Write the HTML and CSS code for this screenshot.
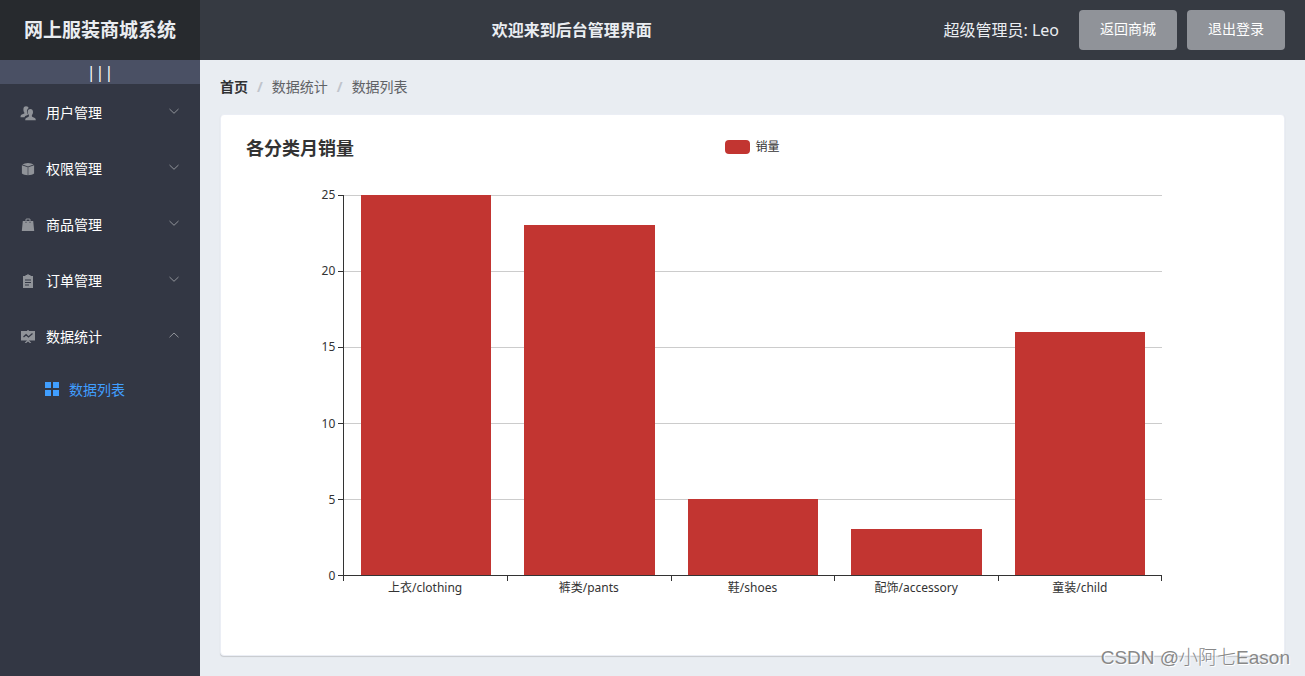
FILE: index.html
```html
<!DOCTYPE html>
<html lang="zh-CN">
<head>
<meta charset="utf-8">
<meta name="viewport" content="width=device-width, initial-scale=1">
<title>网上服装商城系统</title>
<link rel="stylesheet" href="styles.css">
</head>
<body>
<div class="app">
  <header class="header">
    <h1 class="logo">网上服装商城系统</h1>
    <h2 class="welcome">欢迎来到后台管理界面</h2>
    <div class="account">
      <span class="user">超级管理员: Leo</span>
      <div class="actions">
        <button class="btn" type="button">返回商城</button>
        <button class="btn" type="button">退出登录</button>
      </div>
    </div>
  </header>
  <div class="body">
    <aside class="sidebar">
      <button class="toggle" type="button" aria-label="折叠菜单"><span>|</span><span>|</span><span>|</span></button>
      <nav class="menu">
        <button class="menu-item" type="button">
          <svg class="icon" viewBox="0 0 16 16"><path d="M6 1.2c1.700 0 2.400.8 2.700 1.900-1.300.8-2 2.200-1.700 4 .1 1 .5 1.800 1 2.400-.3.6-1.200.900-2.200 1.300-.700.3-1 .7-1.200 1.400H.5c0-2 .6-2.500 2.600-3.200.9-.3 1.400-.6 1.400-1.300C3.700 7 3.400 5.800 3.400 4.200 3.400 2.300 4.300 1.200 6 1.200z"/><path d="M10.300 4c1.700 0 2.700 1.100 2.700 2.900 0 1.400-.4 2.300-1.100 3.100v1c0 .6.5.9 1.300 1.200 1.700.6 2.600 1 2.600 3H5.200c0-2 .7-2.400 2.500-3 .8-.3 1.200-.6 1.200-1.200v-1C8.200 9.300 7.700 8.300 7.700 6.900 7.700 5.100 8.600 4 10.300 4z"/></svg>
          <span class="menu-text">用户管理</span>
          <svg class="arrow" viewBox="0 0 12 12"><path d="M1.500 4 6 8.300 10.500 4"/></svg>
        </button>
        <button class="menu-item" type="button">
          <svg class="icon" viewBox="0 0 16 16"><path d="M8 2c2.200.3 4.200.8 5.600 1.600L8 5.500 2.400 3.600C3.800 2.800 5.800 2.300 8 2z"/><path d="M1.900 4.200 7.700 6.200V14.300C5.300 14 3.300 13.300 1.900 12.400z"/><path d="M14.100 4.200 8.300 6.200V14.300c2.400-.3 4.400-1 5.800-1.900z"/></svg>
          <span class="menu-text">权限管理</span>
          <svg class="arrow" viewBox="0 0 12 12"><path d="M1.500 4 6 8.300 10.500 4"/></svg>
        </button>
        <button class="menu-item" type="button">
          <svg class="icon" viewBox="0 0 16 16"><path fill-rule="evenodd" d="M5.500 4V2.200L6.500 1.500h3l1 .7V4h2.700l1 10H1.800l1-10zM6.500 4h3V2.500h-3zM5.500 4.700v1h1v-1zM9.500 4.700v1h1v-1z"/></svg>
          <span class="menu-text">商品管理</span>
          <svg class="arrow" viewBox="0 0 12 12"><path d="M1.500 4 6 8.300 10.500 4"/></svg>
        </button>
        <button class="menu-item" type="button">
          <svg class="icon" viewBox="0 0 16 16"><path fill-rule="evenodd" d="M3 3h2.500V2h1.300a1.300 1.300 0 0 1 2.400 0h1.300v1H13v12H3zM5 6.500v1h6v-1zM5 9v1h6V9zM5 11.500v1h4v-1z"/></svg>
          <span class="menu-text">订单管理</span>
          <svg class="arrow" viewBox="0 0 12 12"><path d="M1.500 4 6 8.300 10.500 4"/></svg>
        </button>
        <button class="menu-item" type="button" aria-expanded="true">
          <svg class="icon" viewBox="0 0 16 16"><path d="M1 2h6.300V1h1.400v1H15v9.500H1z"/><path d="M7.300 11h1.400l2.600 3H9.800L8 12.500 6.200 14H4.700z"/><path class="cut" d="m3.500 8 2.600-2.300 2.400 2.200L12.500 4.500"/></svg>
          <span class="menu-text">数据统计</span>
          <svg class="arrow" viewBox="0 0 12 12"><path d="M1.500 8.300 6 4l4.500 4.300"/></svg>
        </button>
        <a class="submenu-item" href="#">
          <svg class="icon" viewBox="0 0 16 16"><path d="M1 1h6v6H1zM9 1h6v6H9zM1 9h6v6H1zM9 9h6v6H9z"/></svg>
          <span>数据列表</span>
        </a>
      </nav>
    </aside>
    <main class="main">
      <nav class="breadcrumb">
        <a class="home" href="#">首页</a><span class="sep">/</span><span>数据统计</span><span class="sep">/</span><span>数据列表</span>
      </nav>
      <section class="card">
        <div class="chart">
          <div class="chart-head">
            <h3 class="chart-title">各分类月销量</h3>
            <div class="legend"><i class="swatch"></i><span>销量</span></div>
          </div>
          <div class="plot">
            <div class="y-axis"><span>25</span><span>20</span><span>15</span><span>10</span><span>5</span><span>0</span></div>
            <div class="area">
              <div class="lines"><i></i><i></i><i></i><i></i><i></i></div>
              <div class="bars">
                <i class="bar" style="height:100%"></i>
                <i class="bar" style="height:92%"></i>
                <i class="bar" style="height:20%"></i>
                <i class="bar" style="height:12%"></i>
                <i class="bar" style="height:64%"></i>
              </div>
            </div>
            <div class="x-axis"><span>上衣/clothing</span><span>裤类/pants</span><span>鞋/shoes</span><span>配饰/accessory</span><span>童装/child</span></div>
          </div>
        </div>
      </section>
    </main>
  </div>
  <div class="watermark">CSDN @小阿七Eason</div>
</div>
</body>
</html>
```

FILE: styles.css
```css
* {
  box-sizing: border-box;
}

body {
  margin: 0;
  font-family: "Noto Sans", "Noto Sans CJK SC", sans-serif;
  font-size: 14px;
}

h1, h2, h3 {
  margin: 0;
}

button {
  border: 0;
  padding: 0;
  font: inherit;
  cursor: pointer;
}

a {
  text-decoration: none;
}

.app {
  position: relative;
  display: flex;
  flex-direction: column;
  min-height: 100vh;
}

.header {
  display: flex;
  justify-content: space-between;
  align-items: center;
  height: 60px;
  padding-right: 20px;
  background: #363a42;
  color: #eaedf1;
}

.logo {
  width: 200px;
  background: #272a2e;
  font-size: 19px;
  line-height: 60px;
  text-align: center;
}

.welcome {
  font-size: 16px;
  line-height: 20px;
}

.account {
  display: flex;
  align-items: center;
  gap: 20px;
  font-size: 16px;
  line-height: 20px;
}

.actions {
  display: flex;
  gap: 10px;
}

.btn {
  height: 40px;
  padding: 0 21px 2px;
  border-radius: 4px;
  background: #909399;
  color: #fff;
  font-size: 14px;
}

.body {
  display: flex;
  flex: 1;
}

.sidebar {
  flex: none;
  width: 200px;
  background: #333744;
}

.toggle {
  display: flex;
  justify-content: center;
  width: 100%;
  height: 24px;
  background: #4a5064;
  color: #fff;
  font-size: 16px;
  line-height: 24px;
}

.menu-item {
  display: flex;
  align-items: center;
  width: 100%;
  height: 56px;
  padding: 2px 20px 0;
  background: none;
  color: #fff;
  text-align: left;
}

.icon {
  flex: none;
  width: 16px;
  height: 16px;
  margin-right: 10px;
  fill: #909399;
}

.cut {
  fill: none;
  stroke: #333744;
  stroke-width: 1.3;
}

.menu-text {
  flex: 1;
  padding-bottom: 2px;
}

.arrow {
  width: 12px;
  height: 12px;
  margin-bottom: 4px;
  fill: none;
  stroke: #909399;
}

.submenu-item {
  display: flex;
  align-items: center;
  height: 50px;
  padding-left: 44px;
  color: #409eff;
}

.submenu-item .icon {
  margin-right: 9px;
  fill: #409eff;
}

.main {
  flex: 1;
  min-width: 0;
  padding: 20px;
  background: #e9edf2;
}

.breadcrumb {
  display: flex;
  margin-bottom: 20px;
  color: #606266;
  line-height: 14px;
}

.home {
  color: #303133;
  font-weight: 700;
}

.sep {
  margin: 0 9px;
  color: #c0c4cc;
  font-weight: 700;
}

.card {
  padding: 20px;
  border: 1px solid #ebeef5;
  border-radius: 4px;
  background: #fff;
  box-shadow: 0 1px 1px rgba(0, 0, 0, 0.15);
}

.chart {
  height: 500px;
  color: #333;
  font-size: 12px;
}

.chart-head {
  display: grid;
  grid-template-columns: 1fr auto 1fr;
  height: 60px;
}

.chart-title {
  padding-left: 5px;
  font-size: 18px;
  line-height: 26px;
}

.legend {
  display: flex;
  align-items: center;
  gap: 5px;
  height: 24px;
  line-height: 16px;
}

.swatch {
  width: 25px;
  height: 14px;
  border-radius: 4px;
  background: #c23531;
}

.plot {
  display: grid;
  grid-template-columns: 1fr 8fr 1fr;
  grid-template-rows: 380px auto;
}

.y-axis {
  display: flex;
  flex-direction: column;
  justify-content: space-between;
  margin: -8px 0 -9px;
  line-height: 16px;
}

.y-axis span {
  display: flex;
  align-items: center;
  justify-content: flex-end;
  gap: 3px;
}

.y-axis span::after {
  content: "";
  width: 5px;
  height: 1px;
  background: #333;
}

.area {
  display: grid;
  border-left: 1px solid #333;
}

.lines,
.bars {
  grid-area: 1 / 1;
  display: flex;
}

.lines {
  flex-direction: column;
}

.lines i {
  flex: 1;
  border-top: 1px solid #ccc;
}

.bars {
  align-items: flex-end;
  justify-content: space-around;
}

.bar {
  width: 16%;
  background: #c23531;
}

.x-axis {
  grid-column: 2;
  display: flex;
  border-top: 1px solid #333;
}

.x-axis span {
  flex: 1;
  padding-top: 4px;
  line-height: 16px;
  text-align: center;
  background: linear-gradient(#333, #333) 0 0 / 1px 5px no-repeat;
}

.x-axis span:last-child {
  background: linear-gradient(#333, #333) 0 0 / 1px 5px no-repeat,
    linear-gradient(#333, #333) 100% 0 / 1px 5px no-repeat;
}

.watermark {
  position: absolute;
  right: 15px;
  bottom: 4px;
  color: #888;
  font-family: "Liberation Sans", "Noto Sans CJK SC", sans-serif;
  font-size: 19px;
  font-weight: 300;
  line-height: 28px;
  text-shadow: 1px 1px 0 #fff;
}
```
